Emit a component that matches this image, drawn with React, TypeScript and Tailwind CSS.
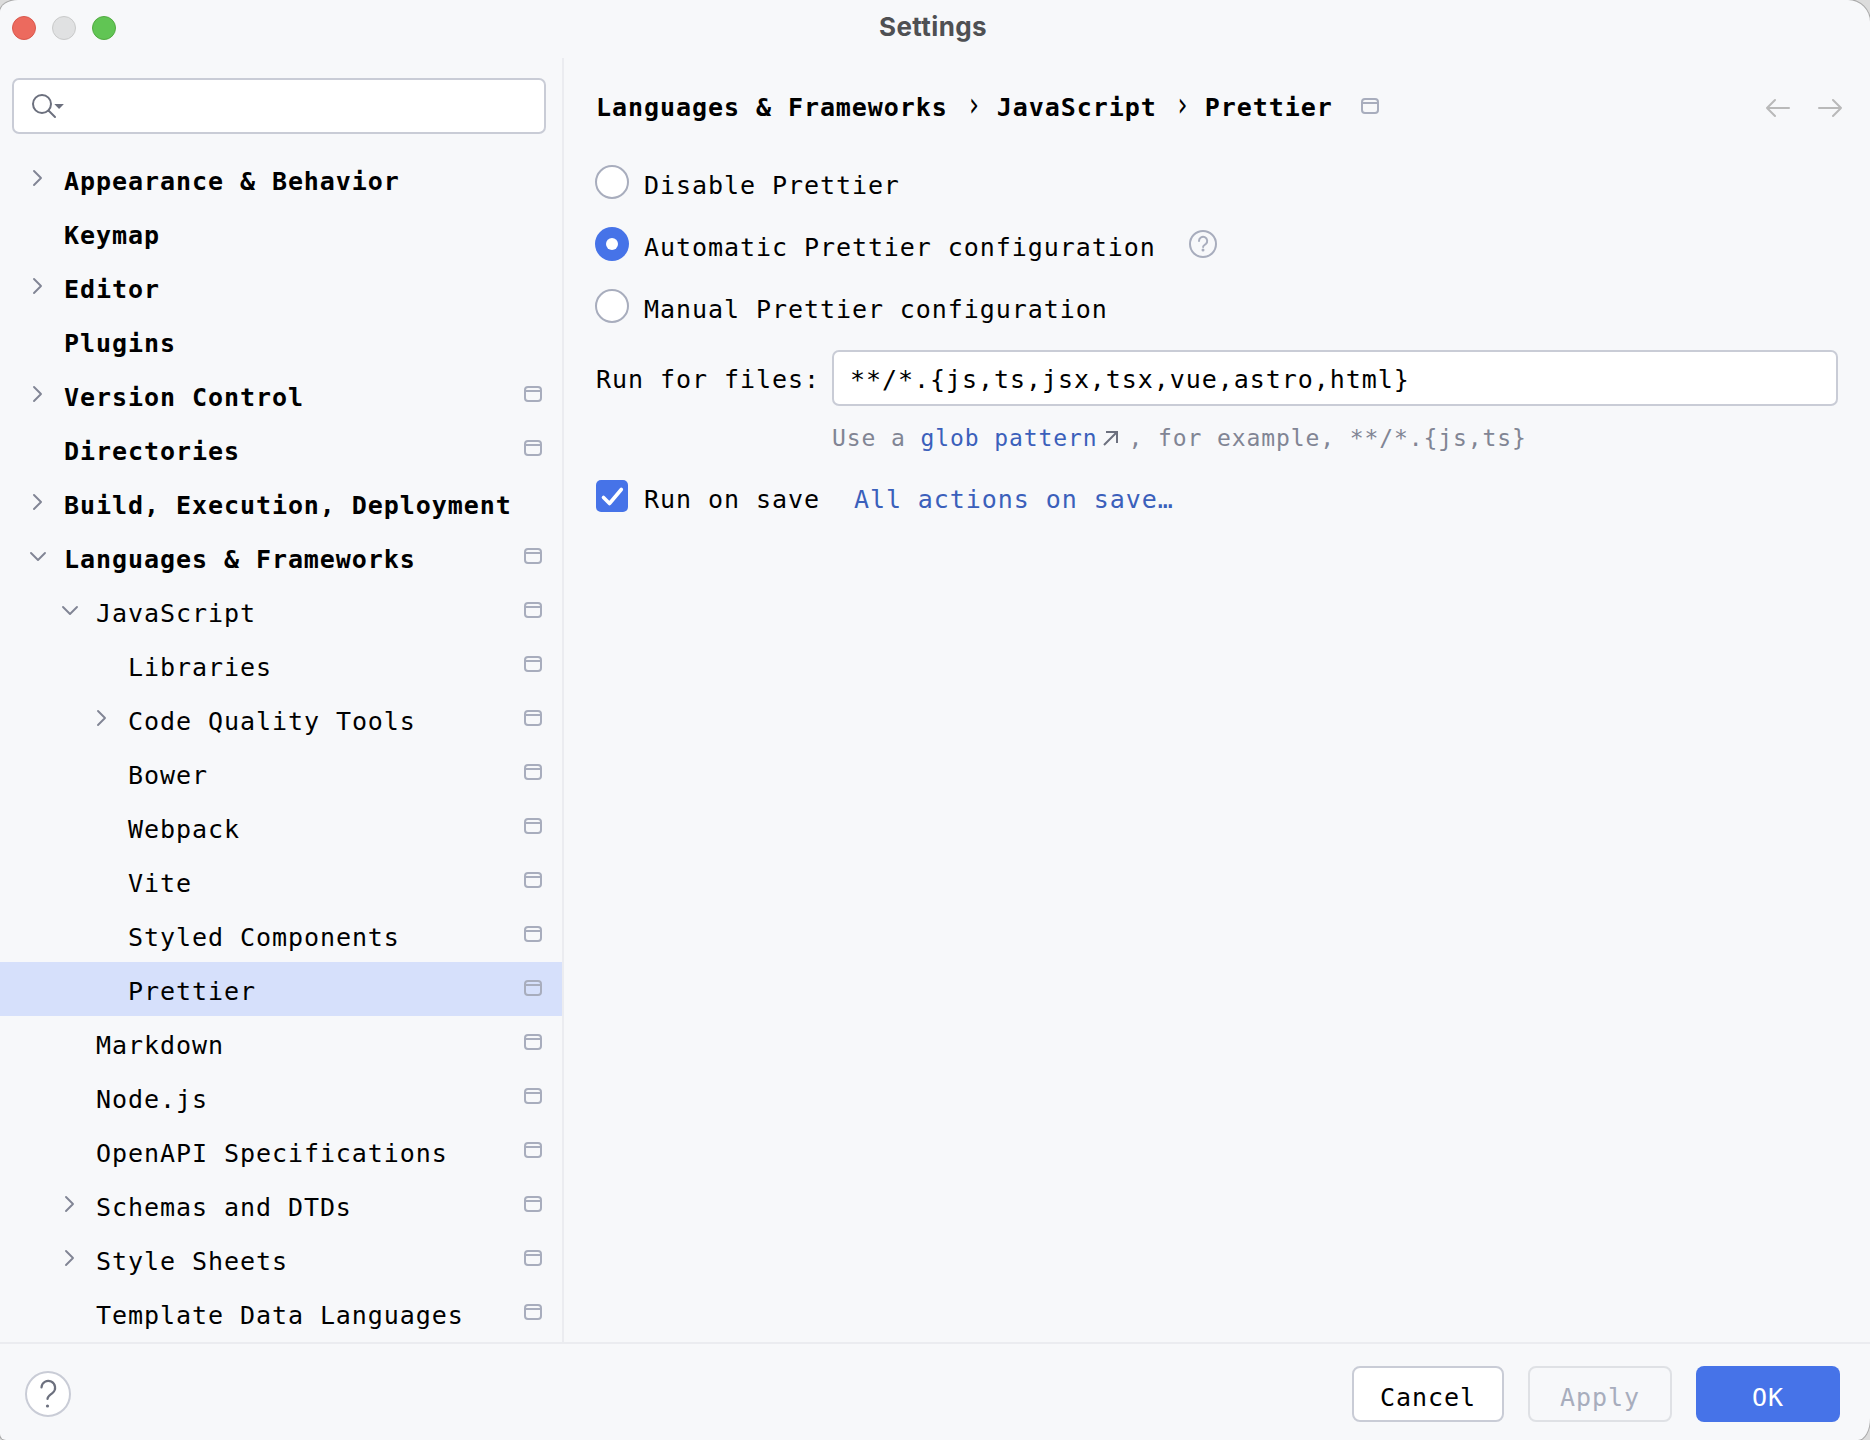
import React from "react";

type Row = { label: string; level: number; open?: boolean; bold?: boolean; scope?: boolean; selected?: boolean };

const rows: Row[] = [
  { label: "Appearance & Behavior", level: 0, open: false, bold: true },
  { label: "Keymap", level: 0, bold: true },
  { label: "Editor", level: 0, open: false, bold: true },
  { label: "Plugins", level: 0, bold: true },
  { label: "Version Control", level: 0, open: false, bold: true, scope: true },
  { label: "Directories", level: 0, bold: true, scope: true },
  { label: "Build, Execution, Deployment", level: 0, open: false, bold: true },
  { label: "Languages & Frameworks", level: 0, open: true, bold: true, scope: true },
  { label: "JavaScript", level: 1, open: true, scope: true },
  { label: "Libraries", level: 2, scope: true },
  { label: "Code Quality Tools", level: 2, open: false, scope: true },
  { label: "Bower", level: 2, scope: true },
  { label: "Webpack", level: 2, scope: true },
  { label: "Vite", level: 2, scope: true },
  { label: "Styled Components", level: 2, scope: true },
  { label: "Prettier", level: 2, scope: true, selected: true },
  { label: "Markdown", level: 1, scope: true },
  { label: "Node.js", level: 1, scope: true },
  { label: "OpenAPI Specifications", level: 1, scope: true },
  { label: "Schemas and DTDs", level: 1, open: false, scope: true },
  { label: "Style Sheets", level: 1, open: false, scope: true },
  { label: "Template Data Languages", level: 1, scope: true },
];

const indent = ["pl-[22px]", "pl-[54px]", "pl-[86px]"];

function ScopeIcon() {
  return (
    <svg className="shrink-0" width="18" height="16" viewBox="0 0 18 16" fill="none" stroke="#a8adbd" strokeWidth="2">
      <rect x="1" y="1" width="16" height="14" rx="3" />
      <path d="M1 5h16" />
    </svg>
  );
}

function Chevron({ open }: { open?: boolean }) {
  return (
    <svg className="-mt-0.5 shrink-0" width="32" height="20" viewBox="0 0 32 20" fill="none" stroke="#818594" strokeWidth="1.9" strokeLinecap="round" strokeLinejoin="round">
      {open === true && <path d="M9 7l7 7 7-7" />}
      {open === false && <path d="M12 3l7 7-7 7" />}
    </svg>
  );
}

function Radio({ label, checked, children }: { label: string; checked?: boolean; children?: React.ReactNode }) {
  return (
    <div className="flex h-[62px] items-center">
      {checked ? (
        <div className="mr-[15px] flex size-[34px] items-center justify-center rounded-full bg-[#4673e8]">
          <div className="size-3 rounded-full bg-white" />
        </div>
      ) : (
        <div className="mr-[15px] size-[34px] rounded-full border-2 border-[#a8adbd] bg-white" />
      )}
      <span className="pt-2">{label}</span>
      {children}
    </div>
  );
}

export default function App() {
  return (
    <div className="h-[1440px] w-[1870px] overflow-hidden bg-[#dcdcdc]">
      <div className="flex h-full flex-col overflow-hidden bg-[#f7f8fa] font-['DejaVu_Sans_Mono',monospace] text-[25px] leading-[30px] tracking-[0.94px] whitespace-pre text-black shadow-[0_0_0_1px_#a9a9a9] [border-radius:18px_22px_12px_6px/12px_22px_22px_6px]">
        <header className="grid h-[58px] shrink-0 grid-cols-3 items-start">
          <div className="flex gap-4 pt-4 pl-3">
            <div className="size-6 rounded-full border border-[#d9584d] bg-[#ec6a5e]" />
            <div className="size-6 rounded-full border border-[#c9caca] bg-[#e0e1e2]" />
            <div className="size-6 rounded-full border border-[#52ab41] bg-[#61c554]" />
          </div>
          <h1 className="pt-3 pr-1 text-center font-['Inter',sans-serif] text-[26px] font-bold tracking-[0.4px] text-[#4f5053]">Settings</h1>
        </header>

        <div className="flex min-h-0 flex-1">
          <aside className="w-[564px] shrink-0 border-r-2 border-[#ebecf0]">
            <div className="mx-3 mt-5 mr-4 flex h-14 items-center rounded-[7px] border-2 border-[#c9ccd6] bg-white pl-4">
              <svg width="36" height="28" viewBox="0 0 36 28" fill="none" stroke="#6c707e" strokeWidth="2" strokeLinecap="round">
                <circle cx="12" cy="12" r="9" />
                <path d="M18.500 18.500l6.500 6.500" />
                <path d="M24.300 12h9.600l-4.800 5z" fill="#6c707e" stroke="none" />
              </svg>
            </div>
            <nav className="mt-[18px]">
              {rows.map((r) => (
                <div key={r.label} className={`flex h-[54px] items-center pr-5 ${indent[r.level]} ${r.selected ? "bg-[#d6e0fb]" : ""}`}>
                  <Chevron open={r.open} />
                  <span className={`flex-1 pt-1.5 pl-2.5 ${r.bold ? "font-bold" : ""}`}>{r.label}</span>
                  {r.scope && <div className="-mt-0.5"><ScopeIcon /></div>}
                </div>
              ))}
            </nav>
          </aside>

          <main className="flex-1 pr-8 pl-[31px]">
            <div className="mt-[34px] ml-px flex h-[30px] items-center font-bold">
              <span className="pt-0.5">Languages &amp; Frameworks</span>
              <span className="w-[49px] -translate-y-[2px] scale-y-[1.35] pl-1 text-center font-normal">›</span>
              <span className="pt-0.5">JavaScript</span>
              <span className="w-[48px] -translate-y-[2px] scale-y-[1.35] pl-1 text-center font-normal">›</span>
              <span className="pt-0.5">Prettier</span>
              <div className="-mt-0.5 ml-7 flex-1"><ScopeIcon /></div>
              <svg className="mt-0.5 -mr-[5px]" width="78" height="20" viewBox="0 0 78 20" fill="none" stroke="#b9b9b9" strokeWidth="2" strokeLinecap="round" strokeLinejoin="round">
                <path d="M24 10H2M10 2l-8 8 8 8M54 10h22M68 2l8 8-8 8" />
              </svg>
            </div>

            <div className="mt-[29px]">
              <Radio label="Disable Prettier" />
              <Radio label="Automatic Prettier configuration" checked>
                <svg className="ml-[33px]" width="28" height="28" viewBox="0 0 28 28" fill="none" stroke="#a8adbd" strokeWidth="2" strokeLinecap="round">
                  <circle cx="14" cy="14" r="13" />
                  <path d="M10 11a4.100 4.100 0 1 1 6.800 3c-1.500 1.200-2.700 1.700-2.700 3" />
                  <circle cx="14" cy="20" r="1.500" fill="#a8adbd" stroke="none" />
                </svg>
              </Radio>
              <Radio label="Manual Prettier configuration" />
            </div>

            <div className="mt-[13px] ml-px flex items-center">
              <span className="w-[236px] pt-1">Run for files:</span>
              <div className="flex h-14 flex-1 items-center rounded-[7px] border-2 border-[#c9ccd6] bg-white pt-1 pl-4">{"**/*.{js,ts,jsx,tsx,vue,astro,html}"}</div>
            </div>
            <div className="mt-[17px] flex items-center pl-[237px] text-[23px] tracking-[0.9px] text-[#818594]">
              <span>Use a </span>
              <span className="text-[#3b60bb]">glob pattern</span>
              <svg className="mr-[9px] ml-[6px]" width="16" height="16" viewBox="0 0 16 16" fill="none" stroke="#6c707e" strokeWidth="2">
                <path d="M1 15L14 2M3 2h11v11" />
              </svg>
              <span>{", for example, **/*.{js,ts}"}</span>
            </div>

            <div className="mt-7 flex items-center">
              <svg className="-mt-1 mr-[15px]" width="34" height="34" viewBox="0 0 34 34" fill="none">
                <rect x="1" y="1" width="32" height="32" rx="5" fill="#4673e8" />
                <path d="M8.500 18.500l6 6L26.300 10.500" stroke="#fff" strokeWidth="3.600" strokeLinecap="round" strokeLinejoin="round" />
              </svg>
              <span className="pt-1">Run on save</span>
              <span className="ml-[34px] pt-1 text-[#3b60bb]">All actions on save…</span>
            </div>
          </main>
        </div>

        <footer className="flex h-[98px] shrink-0 items-center border-t-2 border-[#ebecf0] pt-1 pr-[30px] pl-[25px]">
          <svg width="46" height="46" viewBox="0 0 46 46" fill="none" strokeLinecap="round">
            <circle cx="23" cy="23" r="22" fill="#fff" stroke="#c9ccd6" strokeWidth="2" />
            <path d="M16.500 16.500A6.800 6.800 0 1 1 27.800 21.800C25.500 23.800 22.500 25 22.500 28" stroke="#6c707e" strokeWidth="2.200" />
            <circle cx="22.500" cy="35" r="1.600" fill="#6c707e" />
          </svg>
          <div className="flex-1" />
          <button className="h-14 w-[152px] rounded-[8px] border-2 border-[#c9ccd6] bg-white pt-2">Cancel</button>
          <button className="ml-6 h-14 w-36 rounded-[8px] border-2 border-[#dfe1e5] pt-2 text-[#a8adbd]">Apply</button>
          <button className="ml-6 h-14 w-36 rounded-[8px] bg-[#4673e8] pt-2 text-white">OK</button>
        </footer>
      </div>
    </div>
  );
}
